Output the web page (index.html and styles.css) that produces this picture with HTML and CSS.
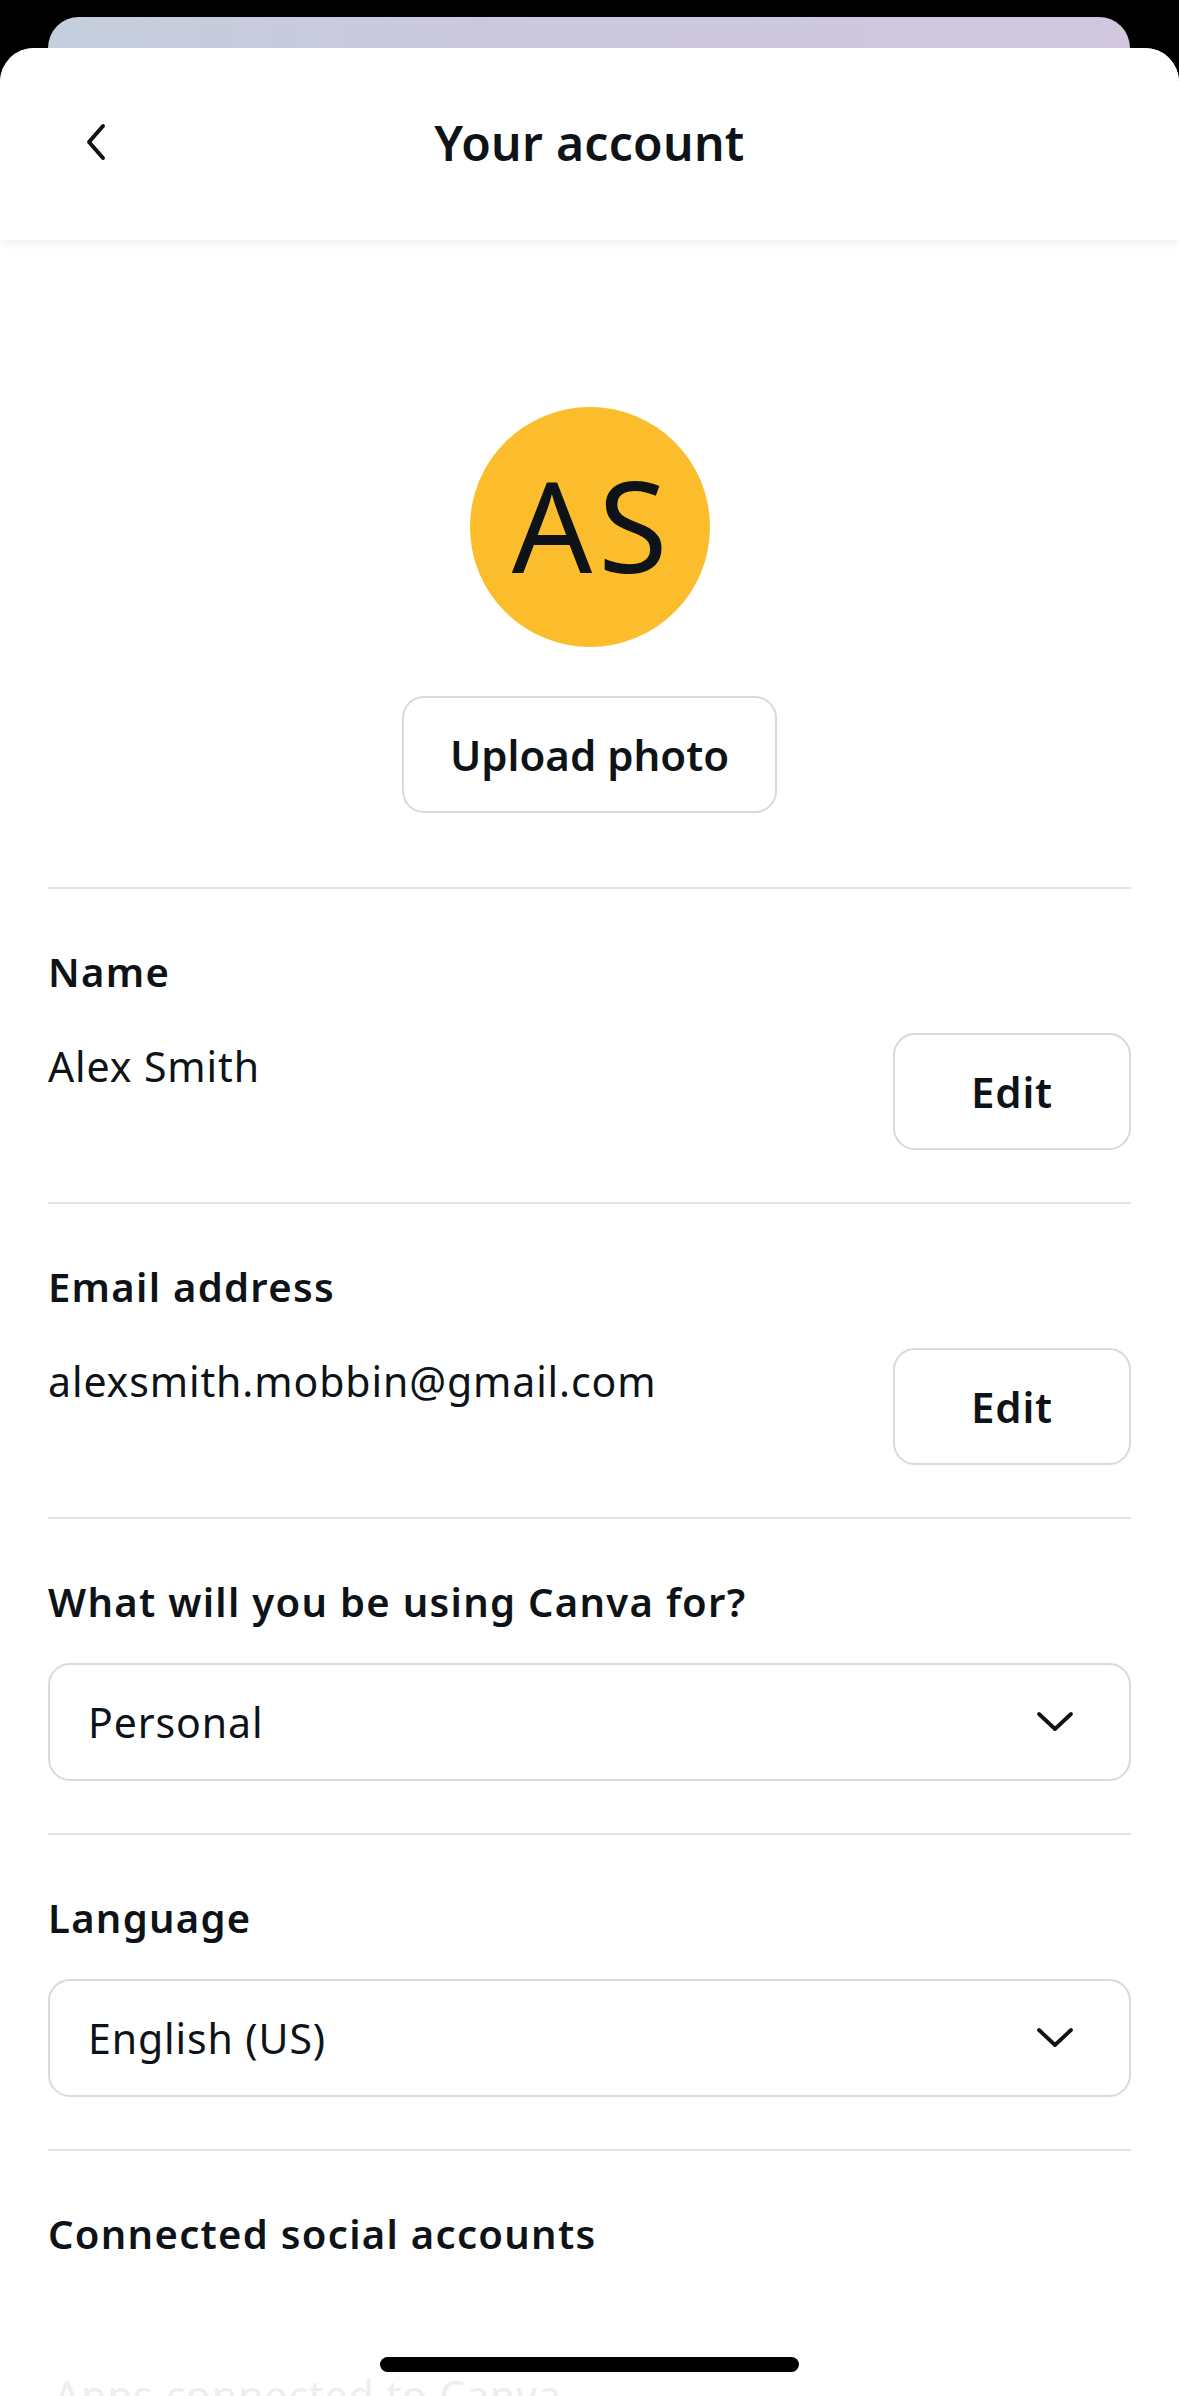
FILE: index.html
```html
<!DOCTYPE html>
<html lang="en">
<head>
<meta charset="utf-8">
<title>Your account</title>
<link rel="stylesheet" href="styles.css">
</head>
<body>
<div class="stage">
  <div class="backcard"></div>
  <div class="sheet">
    <header class="topbar">
      <button class="back" aria-label="Back">
        <svg width="24" height="38" viewBox="0 0 24 38"><path d="M19 3 L5 19 L19 35" fill="none" stroke="#0e1318" stroke-width="4" stroke-linecap="round" stroke-linejoin="round"/></svg>
      </button>
      <h1 class="title">Your account</h1>
    </header>

    <main class="content">
      <div class="profile">
        <div class="avatar">AS</div>
        <button class="btn btn-upload">Upload photo</button>
      </div>

      <section class="section">
        <div class="label">Name</div>
        <div class="row">
          <div class="value">Alex Smith</div>
          <button class="btn btn-edit">Edit</button>
        </div>
      </section>

      <section class="section">
        <div class="label">Email address</div>
        <div class="row">
          <div class="value">alexsmith.mobbin@gmail.com</div>
          <button class="btn btn-edit">Edit</button>
        </div>
      </section>

      <section class="section">
        <div class="label">What will you be using Canva for?</div>
        <div class="select">
          <span class="select-text">Personal</span>
          <svg class="chev" width="38" height="22" viewBox="0 0 38 22"><path d="M3 3 L19 18 L35 3" fill="none" stroke="#0e1318" stroke-width="3.8" stroke-linecap="round" stroke-linejoin="round"/></svg>
        </div>
      </section>

      <section class="section">
        <div class="label">Language</div>
        <div class="select">
          <span class="select-text">English (US)</span>
          <svg class="chev" width="38" height="22" viewBox="0 0 38 22"><path d="M3 3 L19 18 L35 3" fill="none" stroke="#0e1318" stroke-width="3.8" stroke-linecap="round" stroke-linejoin="round"/></svg>
        </div>
      </section>

      <section class="section section-last">
        <div class="label">Connected social accounts</div>
        <div class="faded">Apps connected to Canva</div>
      </section>
    </main>
  </div>
  <div class="home-indicator"></div>
</div>
</body>
</html>
```

FILE: styles.css
```css
* { box-sizing: border-box; }

html, body {
  margin: 0;
  padding: 0;
}

body {
  width: 1179px;
  height: 2396px;
  overflow: hidden;
  background: #000;
  font-family: "Noto Sans", "Open Sans", sans-serif;
  color: #0e1318;
}

.stage {
  position: relative;
  height: 2396px;
  padding-top: 17px;
  display: flex;
  flex-direction: column;
}

.backcard {
  height: 31px;
  margin: 0 49px 0 48px;
  border-radius: 34px 34px 0 0;
  background: linear-gradient(90deg, #c4cedc 0%, #cbc8de 40%, #d0c7df 100%);
  flex: none;
}

.sheet {
  flex: 1;
  background: #fff;
  border-radius: 34px 34px 0 0;
  overflow: hidden;
}

.topbar {
  height: 192px;
  display: flex;
  align-items: center;
  justify-content: center;
  position: relative;
  background: #fff;
  box-shadow: 0 3px 10px rgba(0, 0, 0, 0.07);
}

.back {
  position: absolute;
  left: 84px;
  top: 75px;
  width: 24px;
  height: 38px;
  padding: 0;
  border: 0;
  background: none;
  display: flex;
}

.title {
  margin: 0;
  font-size: 48px;
  font-weight: 600;
  line-height: 60px;
  letter-spacing: 0.3px;
  padding-bottom: 2px;
}

.content {
  padding: 0 48px;
}

.profile {
  display: flex;
  flex-direction: column;
  align-items: center;
  padding: 167px 0 74px;
}

.avatar {
  width: 240px;
  height: 240px;
  border-radius: 50%;
  background: #fbbd2b;
  display: flex;
  align-items: center;
  justify-content: center;
  font-size: 126px;
  font-weight: 400;
  letter-spacing: 6px;
  color: #0e1318;
  line-height: 1;
  padding: 0 0 6px 6px;
}

.btn {
  font-family: inherit;
  color: #0e1318;
  background: #fff;
  border: 2px solid #d9d9d9;
  border-radius: 22px;
  font-weight: 600;
  font-size: 42px;
  padding: 0;
  display: flex;
  align-items: center;
  justify-content: center;
}

.btn-upload {
  margin-top: 49px;
  width: 375px;
  height: 117px;
}

.btn-edit {
  width: 238px;
  height: 117px;
  flex: none;
  letter-spacing: 0.8px;
}

.section {
  border-top: 2px solid #e3e3e5;
  padding: 55px 0 52px;
}

.label {
  font-size: 40px;
  font-weight: 600;
  line-height: 56px;
  letter-spacing: 1.3px;
  margin-bottom: 33px;
}

.row {
  display: flex;
  justify-content: space-between;
  align-items: flex-start;
}

.value {
  font-size: 41px;
  line-height: 66px;
  font-weight: 400;
  letter-spacing: 0.9px;
}

.select {
  height: 118px;
  border: 2px solid #d9d9d9;
  border-radius: 22px;
  display: flex;
  align-items: center;
  justify-content: space-between;
  padding: 0 55px 0 38px;
}

.select-text {
  font-size: 41px;
  font-weight: 400;
  letter-spacing: 0.9px;
}

.chev {
  display: block;
}

.section-last {
  padding-bottom: 0;
}

.faded {
  margin-top: 100px;
  font-size: 41px;
  line-height: 66px;
  color: #eceef0;
  letter-spacing: 0.9px;
  padding-left: 6px;
}

.home-indicator {
  position: absolute;
  left: 380px;
  top: 2357px;
  width: 419px;
  height: 15px;
  border-radius: 8px;
  background: #000;
}
```
